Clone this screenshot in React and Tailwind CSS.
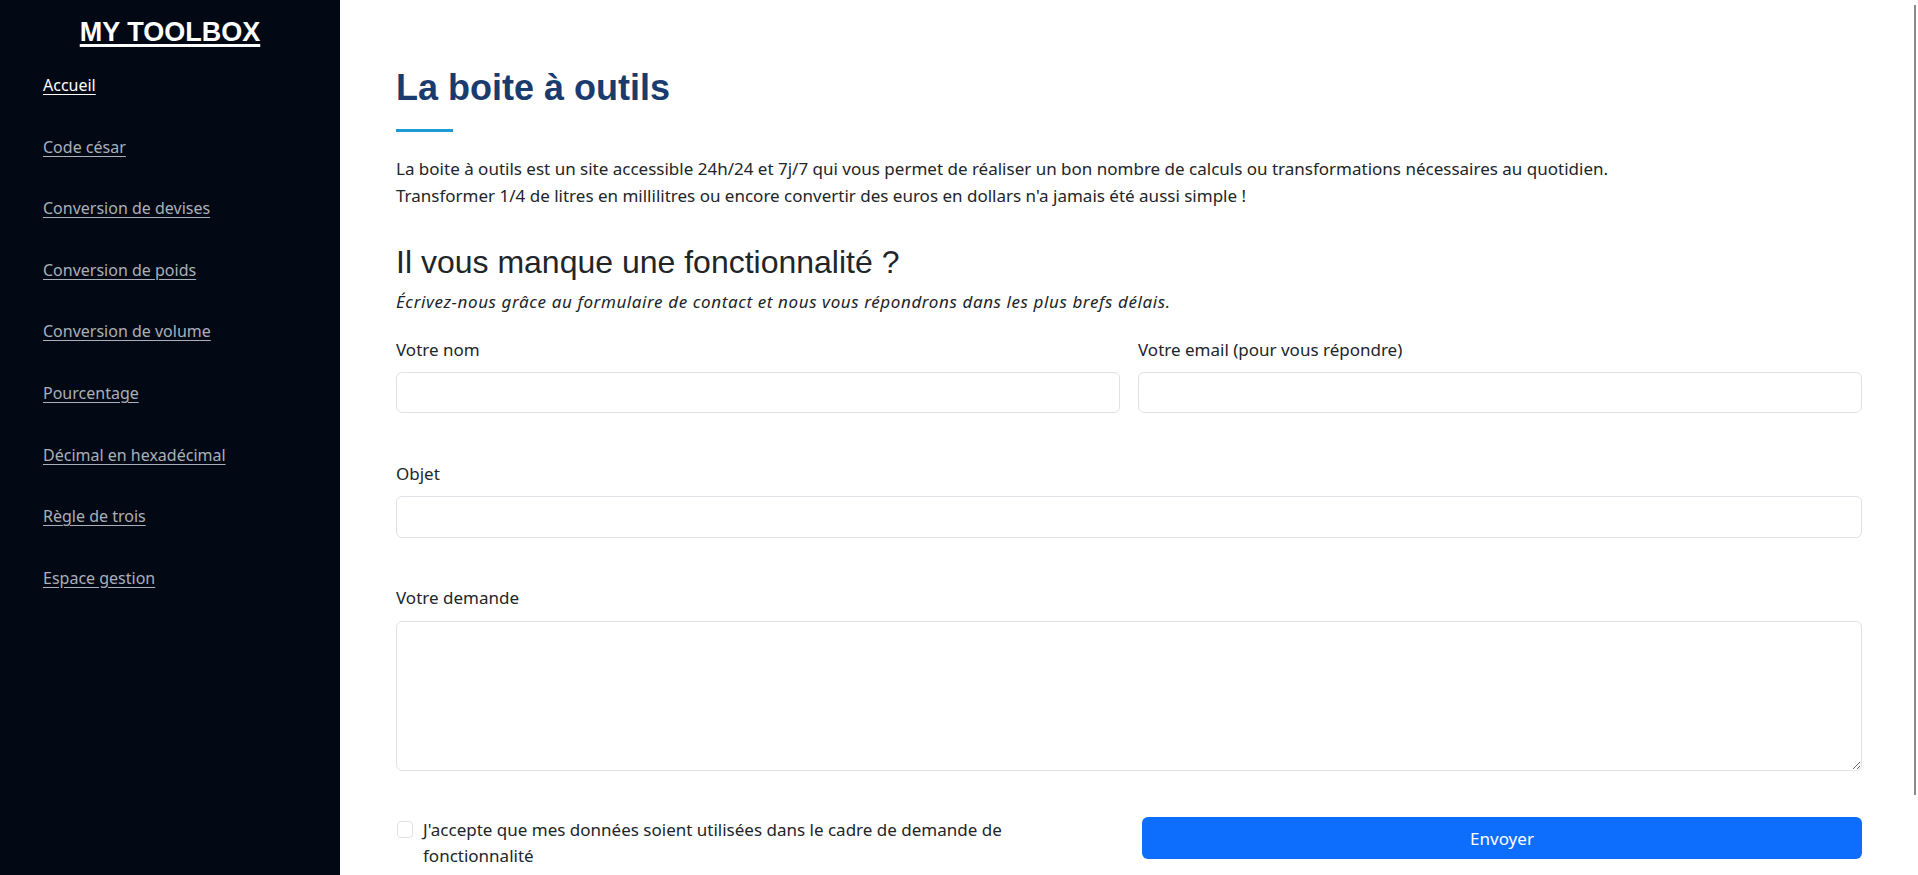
import React from 'react';

const links = [
    'Accueil',
    'Code césar',
    'Conversion de devises',
    'Conversion de poids',
    'Conversion de volume',
    'Pourcentage',
    'Décimal en hexadécimal',
    'Règle de trois',
    'Espace gestion',
];

const body = { fontFamily: '"Noto Sans", "Open Sans", sans-serif' };
const arial = { fontFamily: '"Liberation Sans", Arial, sans-serif' };

const Sidebar = () => (
    <aside className="w-[340px] shrink-0 h-full bg-[#020914] pt-[19px]">
        <h1 style={arial} className="text-center text-white text-[27px] leading-[27px] font-bold underline underline-offset-[3px] decoration-[2.5px]">
            MY TOOLBOX
        </h1>
        <nav style={body} className="mt-[27px] pl-[43px] flex flex-col gap-[37.6px]">
            {links.map((label, i) => (
                <a
                    key={label}
                    href="#"
                    className={`text-[16px] leading-6 underline underline-offset-[3px] w-fit ${i === 0 ? 'text-white' : 'text-[#a9b0b9]'}`}
                >
                    {label}
                </a>
            ))}
        </nav>
    </aside>
);

const App = () => {
    return (
        <div className="relative flex w-full h-[875px] overflow-hidden bg-white">
            <Sidebar />

            <main style={body} className="flex-1 pl-[56px] pr-[56px] pt-[66px] text-[#212529] text-[17px] leading-[26.5px]">
                {/* Page title */}
                <h1 style={arial} className="text-[36px] leading-[1.2] font-bold text-[#1a3b6d]">La boite à outils</h1>
                <div className="mt-[20px] h-[3px] w-[57px] bg-[#1c9ad6]"></div>

                <p className="mt-[24px]">
                    La boite à outils est un site accessible 24h/24 et 7j/7 qui vous permet de réaliser un bon nombre de calculs ou transformations nécessaires au quotidien.
                    <br />
                    Transformer 1/4 de litres en millilitres ou encore convertir des euros en dollars n'a jamais été aussi simple !
                </p>

                <h2 style={arial} className="mt-[33.5px] text-[32px] leading-[1.2] text-[#212529]">Il vous manque une fonctionnalité ?</h2>
                <p className="mt-[8px] italic tracking-[0.6px]">Écrivez-nous grâce au formulaire de contact et nous vous répondrons dans les plus brefs délais.</p>

                {/* Contact form */}
                <form className="mt-[21px]" onSubmit={e => e.preventDefault()}>
                    <div className="grid grid-cols-2 gap-x-[18px]">
                        <div>
                            <label className="block">Votre nom</label>
                            <input type="text" className="mt-[8.5px] block w-full h-[41px] border border-[#dee2e6] rounded-[6px] px-3 outline-none" />
                        </div>
                        <div>
                            <label className="block">Votre email (pour vous répondre)</label>
                            <input type="email" className="mt-[8.5px] block w-full h-[41px] border border-[#dee2e6] rounded-[6px] px-3 outline-none" />
                        </div>
                    </div>

                    <div className="mt-[48px]">
                        <label className="block">Objet</label>
                        <input type="text" className="mt-[9px] block w-full h-[42px] border border-[#dee2e6] rounded-[6px] px-3 outline-none" />
                    </div>

                    <div className="mt-[47px]">
                        <label className="block">Votre demande</label>
                        <textarea className="mt-[9px] block w-full h-[150px] border border-[#dee2e6] rounded-[6px] px-3 py-2 outline-none"></textarea>
                    </div>

                    <div className="mt-[46px] grid grid-cols-2 gap-x-[18px]">
                        <label className="flex items-start gap-[10px]">
                            <span className="mt-[4px] ml-[1px] w-[16px] h-[17px] shrink-0 border border-[#dee2e6] rounded-[4px] bg-white"></span>
                            <span className="w-[620px]">J'accepte que mes données soient utilisées dans le cadre de demande de fonctionnalité</span>
                        </label>
                        <button type="submit" className="ml-[4px] h-[42px] pt-[4px] rounded-[6px] bg-[#0d6efd] text-white">
                            Envoyer
                        </button>
                    </div>
                </form>
            </main>

            {/* overlay scrollbar thumb */}
            <div className="absolute right-[2px] top-[5px] w-[2px] h-[790px] bg-[#8b8b8b]"></div>
        </div>
    );
};

export default App;
